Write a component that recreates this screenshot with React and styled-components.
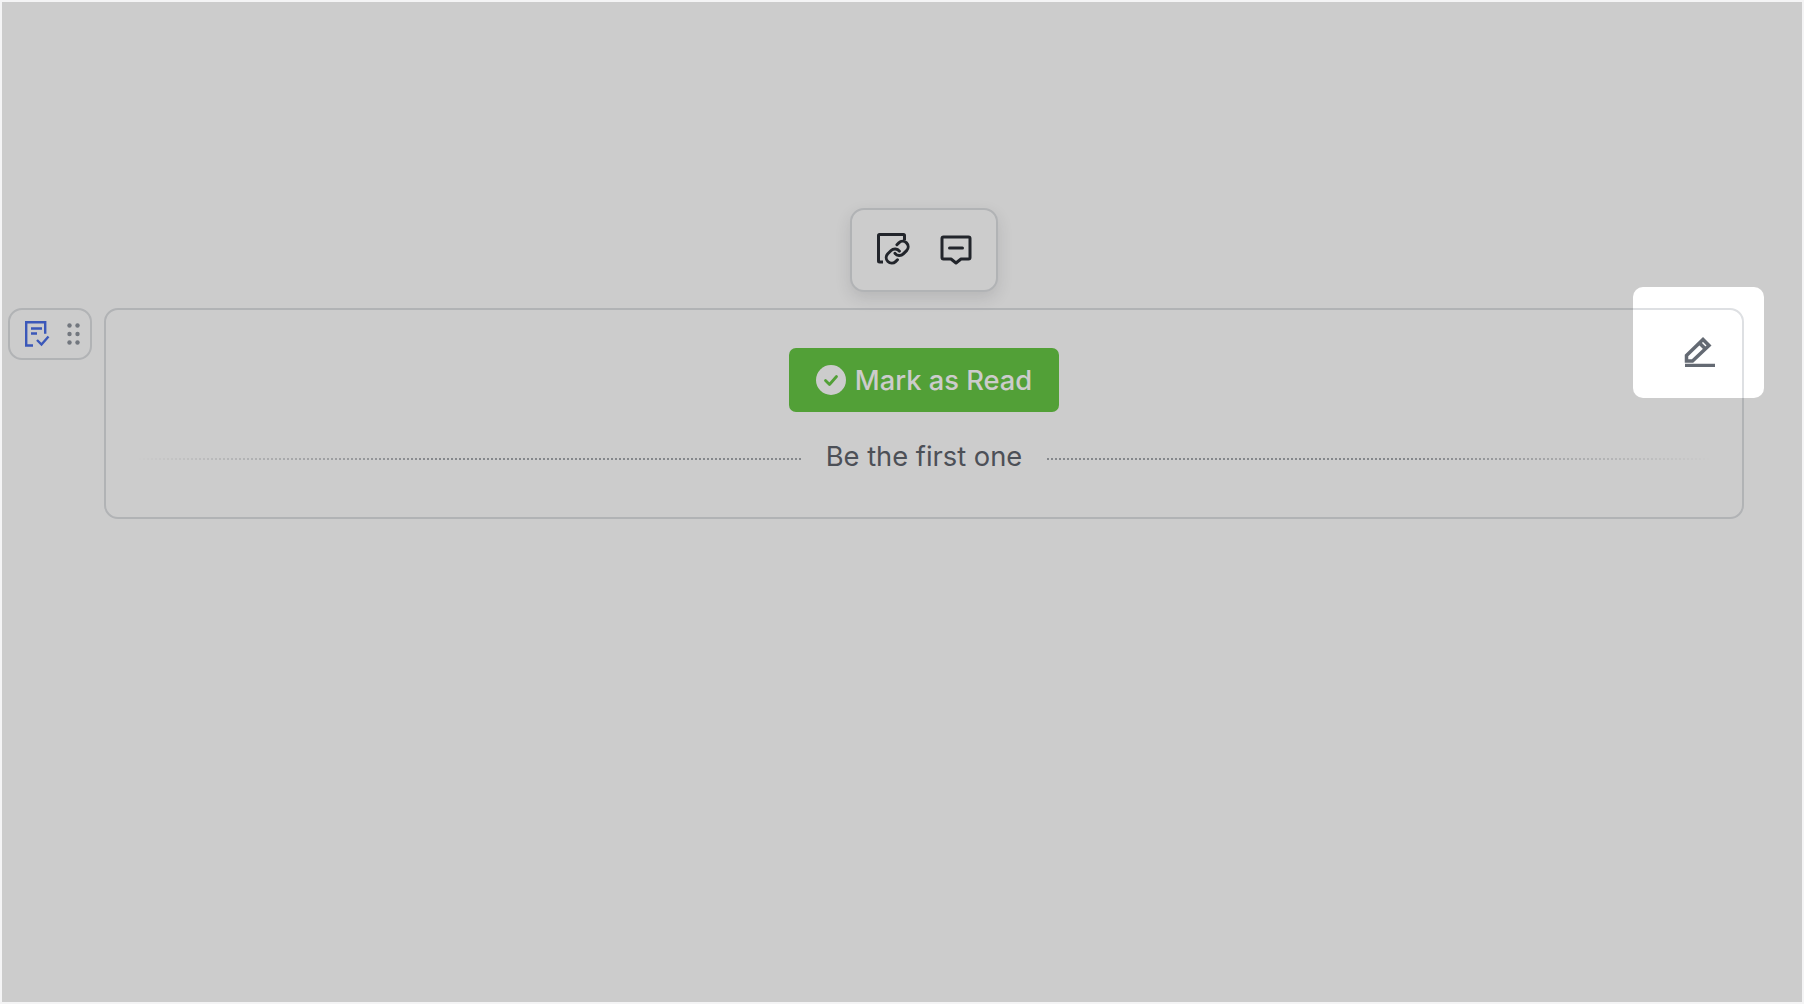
import React from "react";
import styled, { createGlobalStyle } from "styled-components";

const GlobalStyle = createGlobalStyle`
  html, body {
    margin: 0;
    padding: 0;
    background: #f4f4f5;
    font-family: Inter, "Noto Sans", "Liberation Sans", sans-serif;
  }
`;

const Frame = styled.div`
  position: relative;
  width: 1800px;
  height: 1000px;
  margin: 2px 0 0 2px;
  overflow: hidden;
  background: #fff;
`;

const Row = styled.div`
  display: flex;
  align-items: flex-start;
  gap: 12px;
  padding: 306px 0 0 6px;
`;

const Handle = styled.div`
  box-sizing: border-box;
  width: 84px;
  height: 52px;
  display: flex;
  align-items: center;
  justify-content: space-between;
  padding: 0 10px 0 15px;
  border: 2px solid #dee0e3;
  border-radius: 14px;
`;

const Block = styled.div`
  position: relative;
  box-sizing: border-box;
  width: 1640px;
  height: 211px;
  display: flex;
  flex-direction: column;
  align-items: center;
  padding: 38px 30px 0;
  border: 2px solid #dee0e3;
  border-radius: 14px;
`;

const Toolbar = styled.div`
  position: absolute;
  top: -102px;
  left: 50%;
  box-sizing: border-box;
  width: 148px;
  height: 84px;
  margin-left: -74px;
  display: flex;
  align-items: center;
  justify-content: center;
  gap: 28px;
  background: #fff;
  border: 2px solid #dee0e3;
  border-radius: 14px;
  box-shadow: 0 6px 16px rgba(31, 35, 41, 0.12);
`;

const ReadButton = styled.button`
  box-sizing: border-box;
  width: 270px;
  height: 64px;
  display: flex;
  align-items: center;
  justify-content: center;
  gap: 9px;
  padding: 0;
  border: 0;
  border-radius: 7px;
  background: #67c845;
  color: #fff;
  font-family: inherit;
  font-size: 27.3px;
  font-weight: 500;
`;

const Divider = styled.div`
  align-self: stretch;
  display: flex;
  align-items: center;
  gap: 25px;
  margin-top: 27px;
  color: #5f646d;
  font-size: 27.3px;
  line-height: 36px;
`;

const DotLine = styled.div`
  flex: 1;
  height: 2px;
  margin-top: 4px;
  background: repeating-linear-gradient(
    ${(props) => (props.$flip ? "to right" : "to left")},
    #a6a9ae 0 2px,
    transparent 2px 4px
  );
  mask-image: linear-gradient(
    ${(props) => (props.$flip ? "to left" : "to right")},
    transparent 0,
    #000 45%
  );
`;

const Spotlight = styled.div`
  position: absolute;
  left: 1631px;
  top: 285px;
  width: 131px;
  height: 111px;
  border-radius: 10px;
  box-shadow: 0 0 0 2400px rgba(0, 0, 0, 0.2);
`;

const EditButton = styled.div`
  position: absolute;
  left: 1681px;
  top: 333px;
  width: 32px;
  height: 32px;
  color: #646a73;
`;

const LinkDocIcon = () => (
  <svg width="36" height="36" viewBox="0 0 36 36" fill="none" stroke="#2b2f36" strokeWidth="3">
    <path d="M7 30H3.500a1 1 0 0 1-1-1V3.500a1 1 0 0 1 1-1h24a1 1 0 0 1 1 1V8" strokeLinejoin="round" />
    <g transform="translate(8 7) scale(1.1)" strokeWidth="2.700" strokeLinecap="round" strokeLinejoin="round">
      <path d="M10 13a5 5 0 0 0 7.540.540l3-3a5 5 0 0 0-7.070-7.070l-1.720 1.710" />
      <path d="M14 11a5 5 0 0 0-7.540-.540l-3 3a5 5 0 0 0 7.070 7.070l1.710-1.710" />
    </g>
  </svg>
);

const CommentIcon = () => (
  <svg width="32" height="30" viewBox="0 0 32 30" fill="none" stroke="#2b2f36" strokeWidth="3" strokeLinejoin="round">
    <path d="M3.500 2h25a1.500 1.500 0 0 1 1.500 1.500v19a1.500 1.500 0 0 1-1.500 1.500H21l-5 4-5-4H3.500A1.500 1.500 0 0 1 2 22.500v-19A1.500 1.500 0 0 1 3.500 2z" />
    <path d="M9.500 13h13" strokeLinecap="round" />
  </svg>
);

const TaskIcon = () => (
  <svg width="25" height="26" viewBox="0 0 25 26" fill="none" stroke="#4a6fe8" strokeWidth="2.400">
    <path d="M8 24.500H1.200V1.200h19v11.500" />
    <path d="M6 7.500h11M6 12.500h6" />
    <path d="M12 19l4.500 4.500L23.500 15.500" />
  </svg>
);

const DragIcon = () => (
  <svg width="13" height="24" viewBox="0 0 13 24" fill="#8f959e">
    <circle cx="2.500" cy="3.500" r="2.200" />
    <circle cx="10.500" cy="3.500" r="2.200" />
    <circle cx="2.500" cy="12" r="2.200" />
    <circle cx="10.500" cy="12" r="2.200" />
    <circle cx="2.500" cy="20.500" r="2.200" />
    <circle cx="10.500" cy="20.500" r="2.200" />
  </svg>
);

const CheckIcon = () => (
  <svg width="30" height="30" viewBox="0 0 30 30">
    <circle cx="15" cy="15" r="15" fill="#fff" />
    <path d="M9.500 15.500l4 4 7-8" fill="none" stroke="#67c845" strokeWidth="2.800" strokeLinecap="round" strokeLinejoin="round" />
  </svg>
);

const PencilIcon = () => (
  <svg width="32" height="32" viewBox="0 0 32 32" fill="none" stroke="currentColor" strokeWidth="3.500">
    <path d="M2 30.500h30" />
    <path d="M3.500 26V20.500L20 4.500l6 6L9.500 26z" strokeLinejoin="miter" />
    <path d="M16.500 8l6 6" />
  </svg>
);

export default function App() {
  return (
    <>
      <GlobalStyle />
      <Frame>
        <Row>
          <Handle>
            <TaskIcon />
            <DragIcon />
          </Handle>
          <Block>
            <Toolbar>
              <LinkDocIcon />
              <CommentIcon />
            </Toolbar>
            <ReadButton>
              <CheckIcon />
              Mark as Read
            </ReadButton>
            <Divider>
              <DotLine />
              Be the first one
              <DotLine $flip />
            </Divider>
          </Block>
        </Row>
        <EditButton>
          <PencilIcon />
        </EditButton>
        <Spotlight />
      </Frame>
    </>
  );
}
